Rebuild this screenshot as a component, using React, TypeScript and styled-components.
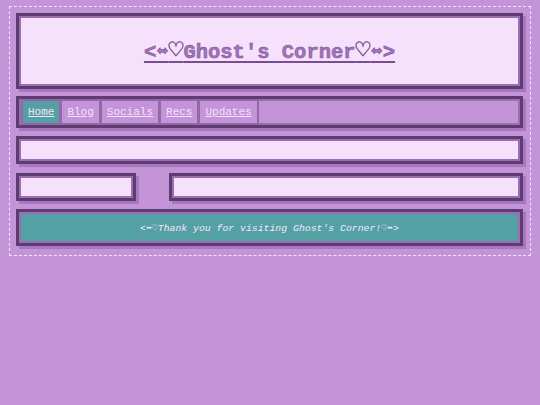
import React from 'react';
import styled, { createGlobalStyle } from 'styled-components';

const GlobalStyle = createGlobalStyle`
    html, body {
        margin: 0;
        padding: 0;
        background: #c494d8;
        font-family: "Liberation Mono", monospace;
    }
    * {
        box-sizing: border-box;
    }
`;

const mono = `"Liberation Mono", "DejaVu Sans Mono", monospace`;

const Wrapper = styled.div`
        margin: 6px 9px 0 9px;
        padding: 6px 7px 9px 6px;
        border: 1px dashed #f4e4fb;
        display: flex;
        flex-direction: column;
    `;

const Panel = styled.div<{ $fill?: string; $height: number; $gap?: number }>`
        height: ${(p) => p.$height}px;
        margin-bottom: ${(p) => p.$gap ?? 0}px;
        background: ${(p) => p.$fill || '#f6e1fc'};
        border: 3px solid #5e3c72;
        box-shadow: inset 0 0 0 2px #9c6db3, 3px 3px 0 #a678bd;
    `;

const Header = styled(Panel)`
        display: flex;
        align-items: center;
        justify-content: center;
    `;

const Title = styled.a`
        font-family: ${mono};
        font-weight: bold;
        font-size: 20.5px;
        color: #a373ba;
        text-decoration: underline;
        text-decoration-thickness: 2px;
        text-underline-offset: 3px;
        -webkit-text-stroke: 0.5px #7a4d92;
        padding-top: 2px;
    `;

const Heart = styled.span`
        font-size: 1.2em;
        line-height: 1;
    `;

const NavBar = styled(Panel)`
        display: flex;
        align-items: stretch;
        padding: 0 2px;
        background: #c494d8;
    `;

const NavItem = styled.a<{ $active?: boolean }>`
        display: flex;
        align-items: center;
        padding: 0 5px;
        background: ${(p) => (p.$active ? '#53a1a4' : '#c494d8')};
        border: 2px solid #9467aa;
        font-family: ${mono};
        font-size: 11px;
        color: #f6e1fc;
        text-decoration: underline;
        margin-right: -1px;
    `;

const Row = styled.div`
        display: flex;
        justify-content: space-between;
        margin-bottom: 8px;
    `;

const Side = styled(Panel)`
        width: 120px;
    `;

const Main = styled(Panel)`
        width: 354px;
    `;

const Footer = styled(Panel)`
        display: flex;
        align-items: center;
        justify-content: center;
    `;

const FooterText = styled.p`
        margin: 0;
        font-family: ${mono};
        font-style: italic;
        font-size: 9.8px;
        color: #f6e8fb;
    `;

const links = ['Home', 'Blog', 'Socials', 'Recs', 'Updates'];

export default function App() {
    return (
        <>
            <GlobalStyle />
            <Wrapper>
                <Header $height={76} $gap={7}>
                    <Title>&lt;⬌<Heart>♡</Heart>Ghost's Corner<Heart>♡</Heart>⬌&gt;</Title>
                </Header>
                <NavBar $height={32} $gap={8}>
                    {links.map((link, i) => (
                        <NavItem key={link} $active={i === 0}>{link}</NavItem>
                    ))}
                </NavBar>
                <Panel $height={28} $gap={9} />
                <Row>
                    <Side $height={28} />
                    <Main $height={28} />
                </Row>
                <Footer $height={37} $fill="#53a1a4">
                    <FooterText>&lt;⬌♡Thank you for visiting Ghost's Corner!♡⬌&gt;</FooterText>
                </Footer>
            </Wrapper>
        </>
    );
}
